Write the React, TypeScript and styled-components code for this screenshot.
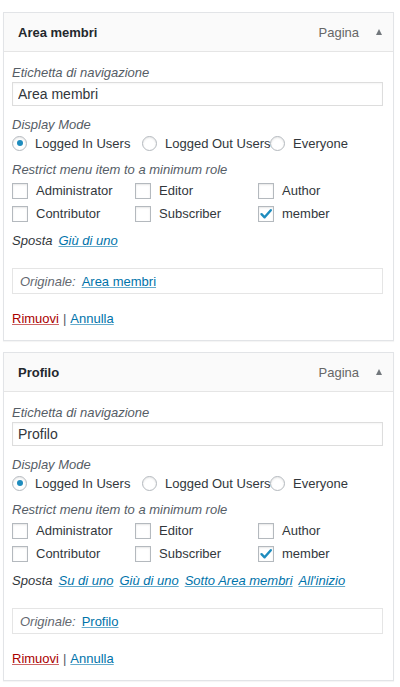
import React from "react";
import styled, { createGlobalStyle } from "styled-components";

const GlobalStyle = createGlobalStyle`
  html, body { margin: 0; padding: 0; background: #ffffff; }
  body {
    font-family: "Liberation Sans", Arial, sans-serif;
    font-size: 13px;
    color: #23282d;
  }
  * { box-sizing: border-box; }
`;

const Page = styled.div`
  display: flex;
  flex-direction: column;
  gap: 11px;
  padding: 12px 0 6px 3px;
`;

const Card = styled.section`
  width: 391px;
  border: 1px solid #e2e4e7;
  background: #fff;
  box-shadow: 0 1px 1px rgba(0, 0, 0, 0.04);
`;

const Header = styled.header`
  height: 39px;
  display: flex;
  align-items: center;
  padding: 0 11px 0 14px;
  background: #fafafa;
  border-bottom: 1px solid #e5e5e5;
`;

const Title = styled.h3`
  flex: 1;
  margin: 0;
  font-size: 13px;
  font-weight: 700;
  color: #23282d;
`;

const TypeLabel = styled.span`
  color: #666;
  font-size: 13px;
  margin-right: 17px;
`;

const Arrow = styled.span`
  width: 0;
  height: 0;
  border-left: 3.5px solid transparent;
  border-right: 3.5px solid transparent;
  border-bottom: 6px solid #72777c;
`;

const Body = styled.div`
  padding: 12px 10px 12px 8px;
  display: flex;
  flex-direction: column;
`;

const FieldLabel = styled.div<{ $mt?: number }>`
  font-style: italic;
  color: #555d66;
  line-height: 18px;
  margin-top: ${(p) => p.$mt ?? 0}px;
`;

const TextInput = styled.input`
  width: 371px;
  height: 24px;
  border: 1px solid #dddddd;
  box-shadow: inset 0 1px 2px rgba(0, 0, 0, 0.04);
  padding: 0 5px;
  font-family: "Liberation Sans", Arial, sans-serif;
  font-size: 14px;
  color: #32373c;
  outline: none;
`;

const RadioRow = styled.div`
  display: flex;
  align-items: center;
  height: 18px;
`;

const RadioOption = styled.label<{ $w?: number }>`
  display: flex;
  align-items: center;
  gap: 8px;
  width: ${(p) => (p.$w ? `${p.$w}px` : "auto")};
  color: #32373c;
  white-space: nowrap;
`;

const RadioCircle = styled.span<{ $on?: boolean }>`
  width: 15px;
  height: 15px;
  border-radius: 50%;
  border: 1px solid #b4b9be;
  box-shadow: inset 0 1px 2px rgba(0, 0, 0, 0.1);
  display: flex;
  align-items: center;
  justify-content: center;
  flex-shrink: 0;
  &::after {
    content: "";
    display: ${(p) => (p.$on ? "block" : "none")};
    width: 6px;
    height: 6px;
    border-radius: 50%;
    background: #1e8cbe;
  }
`;

const RoleGrid = styled.div`
  display: grid;
  grid-template-columns: 123px 123px 123px;
  grid-auto-rows: 23px;
`;

const RoleOption = styled.label`
  display: flex;
  align-items: center;
  gap: 8px;
  color: #32373c;
`;

const CheckBox = styled.span`
  width: 16px;
  height: 16px;
  border: 1px solid #b4b9be;
  box-shadow: inset 0 1px 2px rgba(0, 0, 0, 0.1);
  display: flex;
  align-items: center;
  justify-content: center;
  flex-shrink: 0;
`;

const MoveRow = styled.div`
  display: flex;
  gap: 6px;
  line-height: 18px;
  margin-top: 7px;
  font-style: italic;
`;

const MoveLabel = styled.span`
  color: #32373c;
`;

const Link = styled.a<{ $danger?: boolean }>`
  color: ${(p) => (p.$danger ? "#a00" : "#0073aa")};
  text-decoration: underline;
  text-decoration-color: ${(p) => (p.$danger ? "rgba(170,0,0,0.6)" : "rgba(0,115,170,0.6)")};
  cursor: pointer;
`;

const OriginalBox = styled.div`
  width: 371px;
  height: 26px;
  margin-top: 18px;
  border: 1px solid #e5e5e5;
  display: flex;
  align-items: center;
  padding: 0 7px;
  gap: 6px;
`;

const OriginalLabel = styled.span`
  font-style: italic;
  color: #646970;
`;

const Actions = styled.div`
  margin-top: 16px;
  line-height: 18px;
  color: #555d66;
  display: flex;
  gap: 4px;
`;

const Check = () => (
  <svg width="14" height="12" viewBox="0 0 14 12">
    <path d="M2.5 6.2 L5.6 9.3 L11.8 2.2" fill="none" stroke="#1e8cbe" strokeWidth="2.4" strokeLinecap="round" strokeLinejoin="round" />
  </svg>
);

type ItemProps = { title: string; moves: string[] };

const roles = [
  ["Administrator", false],
  ["Editor", false],
  ["Author", false],
  ["Contributor", false],
  ["Subscriber", false],
  ["member", true],
] as const;

const MenuItem = ({ title, moves }: ItemProps) => (
  <Card>
    <Header>
      <Title>{title}</Title>
      <TypeLabel>Pagina</TypeLabel>
      <Arrow />
    </Header>
    <Body>
      <FieldLabel>Etichetta di navigazione</FieldLabel>
      <TextInput defaultValue={title} />
      <FieldLabel $mt={10}>Display Mode</FieldLabel>
      <RadioRow>
        <RadioOption $w={130}>
          <RadioCircle $on />
          Logged In Users
        </RadioOption>
        <RadioOption $w={128}>
          <RadioCircle />
          Logged Out Users
        </RadioOption>
        <RadioOption>
          <RadioCircle />
          Everyone
        </RadioOption>
      </RadioRow>
      <FieldLabel $mt={9}>Restrict menu item to a minimum role</FieldLabel>
      <RoleGrid>
        {roles.map(([name, on]) => (
          <RoleOption key={name}>
            <CheckBox>{on && <Check />}</CheckBox>
            {name}
          </RoleOption>
        ))}
      </RoleGrid>
      <MoveRow>
        <MoveLabel>Sposta</MoveLabel>
        {moves.map((m) => (
          <Link key={m}>{m}</Link>
        ))}
      </MoveRow>
      <OriginalBox>
        <OriginalLabel>Originale:</OriginalLabel>
        <Link>{title}</Link>
      </OriginalBox>
      <Actions>
        <Link $danger>Rimuovi</Link>|<Link>Annulla</Link>
      </Actions>
    </Body>
  </Card>
);

export default function App() {
  return (
    <>
      <GlobalStyle />
      <Page>
        <MenuItem title="Area membri" moves={["Giù di uno"]} />
        <MenuItem
          title="Profilo"
          moves={["Su di uno", "Giù di uno", "Sotto Area membri", "All'inizio"]}
        />
      </Page>
    </>
  );
}
